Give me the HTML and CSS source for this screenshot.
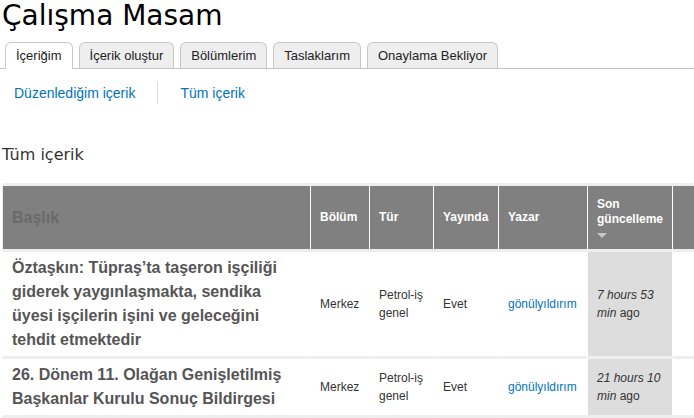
FILE: index.html
```html
<!DOCTYPE html>
<html lang="tr">
<head>
<meta charset="utf-8">
<title>Çalışma Masam</title>
<link rel="stylesheet" href="styles.css">
</head>
<body>
<h1 class="page-title">Çalışma Masam</h1>
<ul class="tabs-primary">
  <li class="tab active"><a href="#">İçeriğim</a></li>
  <li class="tab"><a href="#">İçerik oluştur</a></li>
  <li class="tab"><a href="#">Bölümlerim</a></li>
  <li class="tab"><a href="#">Taslaklarım</a></li>
  <li class="tab"><a href="#">Onaylama Bekliyor</a></li>
</ul>
<ul class="tabs-secondary">
  <li class="subtab"><a href="#">Düzenlediğim içerik</a></li>
  <li class="subtab"><a href="#">Tüm içerik</a></li>
</ul>
<h2 class="block-title">Tüm içerik</h2>
<table class="content-table">
  <thead>
    <tr>
      <th class="col-title">Başlık</th>
      <th class="col-section">Bölüm</th>
      <th class="col-type">Tür</th>
      <th class="col-pub">Yayında</th>
      <th class="col-author">Yazar</th>
      <th class="col-updated">Son güncelleme<span class="sort-arrow"></span></th>
      <th class="col-extra"></th>
    </tr>
  </thead>
  <tbody>
    <tr>
      <td class="cell-title">Öztaşkın: Tüpraş’ta taşeron işçiliği giderek yaygınlaşmakta, sendika üyesi işçilerin işini ve geleceğini tehdit etmektedir</td>
      <td>Merkez</td>
      <td>Petrol-iş genel</td>
      <td>Evet</td>
      <td><a href="#">gönülyıldırım</a></td>
      <td class="cell-updated"><em>7 hours 53 min</em> ago</td>
      <td></td>
    </tr>
    <tr>
      <td class="cell-title">26. Dönem 11. Olağan Genişletilmiş Başkanlar Kurulu Sonuç Bildirgesi</td>
      <td>Merkez</td>
      <td>Petrol-iş genel</td>
      <td>Evet</td>
      <td><a href="#">gönülyıldırım</a></td>
      <td class="cell-updated"><em>21 hours 10 min</em> ago</td>
      <td></td>
    </tr>
  </tbody>
</table>
</body>
</html>
```
FILE: styles.css
```css
html, body {
  margin: 0;
  overflow: hidden;
  background: #fff;
}
body {
  padding: 0 0 0 2px;
  font-family: "Liberation Sans", Arial, sans-serif;
  color: #333;
}
a {
  text-decoration: none;
}

.page-title {
  margin: 0;
  font-family: "DejaVu Sans", Verdana, sans-serif;
  font-size: 28px;
  font-weight: normal;
  line-height: 32px;
  color: #000;
}

.tabs-primary {
  list-style: none;
  margin: 10px 0 0 -2px;
  padding: 0 0 0 5px;
  display: flex;
  gap: 6px;
  border-bottom: 1px solid #c4c4c4;
}
.tab a {
  display: block;
  padding: 5px 10px 4px;
  font-size: 13px;
  line-height: 16px;
  color: #222;
  background: #eee;
  border: 1px solid #c8c8c8;
  border-bottom: none;
  border-radius: 6px 6px 0 0;
}
.tab.active a {
  background: #fff;
  margin-bottom: -1px;
  padding-bottom: 5px;
}

.tabs-secondary {
  list-style: none;
  margin: 13px 0 0 0;
  padding: 0;
  display: flex;
}
.subtab a {
  display: block;
  padding: 0 22px;
  font-size: 14px;
  line-height: 22px;
  color: #0074bd;
}
.subtab:first-child a {
  padding-left: 12px;
}
.subtab + .subtab {
  border-left: 1px solid #ddd;
}

.block-title {
  margin: 41px 0 0 0;
  font-family: "DejaVu Sans", Verdana, sans-serif;
  font-size: 16px;
  font-weight: normal;
  line-height: 19px;
  color: #333;
}

.content-table {
  margin-top: 19px;
  border-collapse: separate;
  border-spacing: 0;
  table-layout: fixed;
  width: 710px;
}
.content-table th,
.content-table td {
  box-sizing: border-box;
  border-left: 1px solid #fff;
  border-top: 3px solid #eee;
  padding: 4px 6px 4px 9px;
  vertical-align: middle;
  text-align: left;
}
.content-table th {
  background: #808080;
  color: #fff;
  font-size: 12px;
  font-weight: bold;
  line-height: 15px;
  padding-top: 11px;
  padding-bottom: 11px;
}
.content-table th:first-child {
  border-left-color: #eee;
}
.content-table th.col-title {
  font-size: 16px;
  color: #6a6a6a;
}
.col-title { width: 308px; }
.col-section { width: 59px; }
.col-type { width: 64px; }
.col-pub { width: 65px; }
.col-author { width: 89px; }
.col-updated { width: 85px; }
.col-extra { width: 40px; }

.sort-arrow {
  display: block;
  width: 0;
  height: 0;
  margin-top: 6px;
  border-left: 5px solid transparent;
  border-right: 5px solid transparent;
  border-top: 5px solid #c8c8c8;
}

.content-table td {
  font-size: 12px;
  line-height: 18px;
  color: #333;
}
.content-table td a {
  color: #0074bd;
}
.content-table td.cell-title {
  font-size: 16px;
  font-weight: bold;
  line-height: 24px;
  color: #555;
  padding-right: 10px;
}
.content-table td.cell-updated {
  background: #ddd;
}
.content-table tbody tr:last-child td {
  border-bottom: 3px solid #eee;
}
```
